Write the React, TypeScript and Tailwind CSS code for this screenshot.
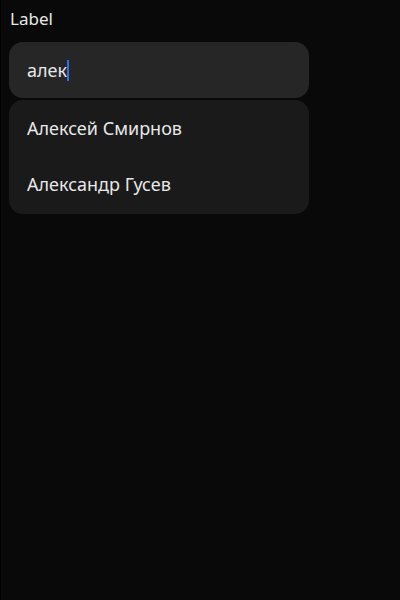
export default function App() {
  const font = { fontFamily: '"Noto Sans", "Open Sans", sans-serif' };
  return (
    <div className="w-[400px] h-[600px] bg-[#090909] border-l border-black text-[#e8e8e8]" style={font}>
      <div className="pl-[9px] pt-[7px] text-[17px] leading-[24px]">Label</div>
      <div className="mt-[11px] ml-[8px] w-[300px]">
        <div className="h-[56px] rounded-[14px] bg-[#262626] flex items-center px-[18px] text-[18px]">
          <span>алек</span>
          <span className="inline-block w-[2px] h-[21px] bg-[#2f6cf0]"></span>
        </div>
        <div className="mt-[2px] rounded-[14px] bg-[#1a1a1a] pb-[2px]">
          <div className="h-[56px] flex items-center px-[18px] text-[18px]">Алексей Смирнов</div>
          <div className="h-[56px] flex items-center px-[18px] text-[18px]">Александр Гусев</div>
        </div>
      </div>
    </div>
  );
}
